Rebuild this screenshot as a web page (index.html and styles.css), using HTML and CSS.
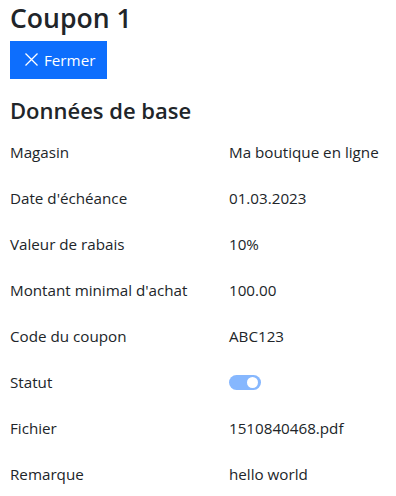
FILE: index.html
```html
<!DOCTYPE html>
<html lang="fr">
<head>
    <meta charset="UTF-8">
    <meta name="viewport" content="width=device-width, initial-scale=1.0">
    <title>Coupon 1</title>
    <link rel="stylesheet" href="styles.css">
</head>
<body>
    <div class="page">
        <h1>Coupon 1</h1>
        <button class="btn-close-page" type="button">
            <svg class="icon-x" width="13" height="13" viewBox="0 0 13 13" aria-hidden="true">
                <path d="M0.5 0.5 L12.5 12.5 M12.5 0.5 L0.5 12.5" stroke="#fff" stroke-width="1.3" fill="none"/>
            </svg>
            Fermer
        </button>
        <h2>Données de base</h2>
        <div class="details">
            <div class="label">Magasin</div>
            <div class="value">Ma boutique en ligne</div>

            <div class="label">Date d'échéance</div>
            <div class="value">01.03.2023</div>

            <div class="label">Valeur de rabais</div>
            <div class="value">10%</div>

            <div class="label">Montant minimal d'achat</div>
            <div class="value">100.00</div>

            <div class="label">Code du coupon</div>
            <div class="value">ABC123</div>

            <div class="label">Statut</div>
            <div class="value"><span class="switch"><span class="knob"></span></span></div>

            <div class="label">Fichier</div>
            <div class="value">1510840468.pdf</div>

            <div class="label">Remarque</div>
            <div class="value">hello world</div>
        </div>
    </div>
</body>
</html>
```
FILE: styles.css
```css
body {
    margin: 0;
    font-family: "Open Sans", "Noto Sans", sans-serif;
    font-size: 15.2px;
    line-height: 1.5;
    color: #212529;
    background-color: #fff;
}

.page {
    padding: 0 10px;
}

h1 {
    margin: 0 0 6px;
    padding-top: 3px;
    font-size: 26.6px;
    font-weight: 600;
    line-height: 1.2;
}

.btn-close-page {
    display: inline-flex;
    align-items: center;
    gap: 6px;
    height: 38px;
    padding: 0 12px 0 15px;
    border: none;
    border-radius: 0;
    background-color: #0d6efd;
    color: #fff;
    font-family: inherit;
    font-size: 15.2px;
    cursor: pointer;
}

.icon-x {
    display: block;
}

h2 {
    margin: 18px 0 0;
    font-size: 22px;
    font-weight: 600;
    line-height: 1.2;
}

.details {
    display: grid;
    grid-template-columns: 219px 1fr;
    grid-auto-rows: 46px;
    align-items: center;
    margin-top: 6px;
}

.label,
.value {
    display: flex;
    align-items: center;
    height: 100%;
    white-space: nowrap;
}

.switch {
    position: relative;
    display: inline-block;
    width: 32px;
    height: 15px;
    border-radius: 8px;
    background-color: #86b7fe;
}

.knob {
    position: absolute;
    top: 2px;
    right: 3px;
    width: 11px;
    height: 11px;
    border-radius: 50%;
    background-color: #fff;
}
```
